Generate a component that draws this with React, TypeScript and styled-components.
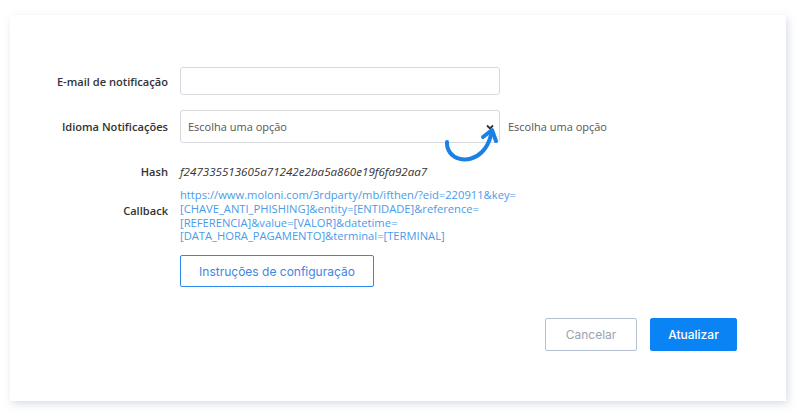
import React from "react";
import styled, { createGlobalStyle } from "styled-components";

const Global = createGlobalStyle`
  html, body { margin: 0; padding: 0; background: #ffffff; }
  body { font-family: "Open Sans", "Noto Sans", sans-serif; }
`;

const Page = styled.div`
  width: 800px;
  height: 416px;
  padding: 15px 14px 15px 10px;
  box-sizing: border-box;
`;

const Card = styled.div`
  background: #fff;
  height: 386px;
  box-sizing: border-box;
  box-shadow: 2px 3px 8px rgba(150, 160, 190, 0.35);
  padding: 52px 49px 0 0;
  display: flex;
  flex-direction: column;
`;

const Form = styled.div`
  display: grid;
  grid-template-columns: 158px 1fr;
  column-gap: 12px;
  align-items: center;
`;

const Label = styled.div<{ $mt?: number; $top?: boolean }>`
  text-align: right;
  font-size: 11.1px;
  font-weight: 600;
  color: #333;
  margin-top: ${(p) => p.$mt ?? 0}px;
  align-self: ${(p) => (p.$top ? "start" : "center")};
`;

const Field = styled.div<{ $mt?: number }>`
  display: flex;
  align-items: center;
  gap: 8px;
  margin-top: ${(p) => p.$mt ?? 0}px;
  position: relative;
`;

const Input = styled.div`
  width: 320px;
  height: 28px;
  box-sizing: border-box;
  border: 1px solid #d6d9de;
  border-radius: 3px;
`;

const Select = styled.div`
  width: 320px;
  height: 33px;
  box-sizing: border-box;
  border: 1px solid #d6d9de;
  border-radius: 3px;
  display: flex;
  align-items: center;
  justify-content: space-between;
  padding: 0 4px 0 7px;
  font-size: 11px;
  color: #555;
`;

const Hint = styled.span`
  font-size: 11px;
  color: #555;
`;

const Hash = styled.div`
  font-size: 11.6px;
  font-style: italic;
  color: #333;
`;

const Link = styled.div`
  font-size: 11.2px;
  line-height: 13.8px;
  color: #4a9be9;
`;

const OutlineButton = styled.button<{ $mt?: number }>`
  justify-self: start;
  margin-top: ${(p) => p.$mt ?? 0}px;
  width: 194px;
  height: 32px;
  border: 1px solid #2b8af0;
  border-radius: 2px;
  background: #fff;
  color: #3d86e6;
  font-family: "Inter", "Noto Sans", sans-serif;
  font-size: 12px;
  padding: 0;
`;

const Footer = styled.div`
  display: flex;
  justify-content: flex-end;
  gap: 13px;
  margin-top: 31px;
`;

const Button = styled.button<{ $primary?: boolean }>`
  height: 33px;
  width: ${(p) => (p.$primary ? 87 : 92)}px;
  border-radius: 2px;
  font-family: "Inter", "Noto Sans", sans-serif;
  font-size: 12px;
  padding: 0;
  border: 1px solid ${(p) => (p.$primary ? "#0a84f5" : "#b4bfcf")};
  background: ${(p) => (p.$primary ? "#0a84f5" : "#fff")};
  color: ${(p) => (p.$primary ? "#fff" : "#9aa3b2")};
  font-weight: ${(p) => (p.$primary ? 500 : 400)};
`;

const Arrow = styled.svg`
  position: absolute;
  left: 261px;
  top: 28px;
  overflow: visible;
`;

export default function App() {
  return (
    <>
      <Global />
      <Page>
        <Card>
          <Form>
            <Label>E-mail de notificação</Label>
            <Field>
              <Input />
            </Field>
            <Label $mt={15}>Idioma Notificações</Label>
            <Field $mt={15}>
              <Select>
                <span>Escolha uma opção</span>
                <svg width="10" height="8" viewBox="0 0 10 8">
                  <path d="M2 2.5 L5 5.5 L8 2.5" fill="none" stroke="#333" strokeWidth="1.8" />
                </svg>
              </Select>
              <Hint>Escolha uma opção</Hint>
              <Arrow width="60" height="30" viewBox="0 0 60 30">
                <path d="M6 4 C 5 21, 27 28, 41 14 C 45 10, 48 5, 50 -3" fill="none" stroke="#1a80e6" strokeWidth="4" strokeLinecap="round" />
                <path d="M42 -1 L51 -8 L55 3" fill="none" stroke="#1a80e6" strokeWidth="4" strokeLinecap="round" strokeLinejoin="round" />
              </Arrow>
            </Field>
            <Label $mt={21}>Hash</Label>
            <Hash style={{ marginTop: 21 }}>f247335513605a71242e2ba5a860e19f6fa92aa7</Hash>
            <Label $mt={24} $top>Callback</Label>
            <Link style={{ marginTop: 9 }}>
              https://www.moloni.com/3rdparty/mb/ifthen/?eid=220911&amp;key=
              <br />
              [CHAVE_ANTI_PHISHING]&amp;entity=[ENTIDADE]&amp;reference=
              <br />
              [REFERENCIA]&amp;value=[VALOR]&amp;datetime=
              <br />
              [DATA_HORA_PAGAMENTO]&amp;terminal=[TERMINAL]
            </Link>
            <span />
            <OutlineButton $mt={12}>Instruções de configuração</OutlineButton>
          </Form>
          <Footer>
            <Button>Cancelar</Button>
            <Button $primary>Atualizar</Button>
          </Footer>
        </Card>
      </Page>
    </>
  );
}
